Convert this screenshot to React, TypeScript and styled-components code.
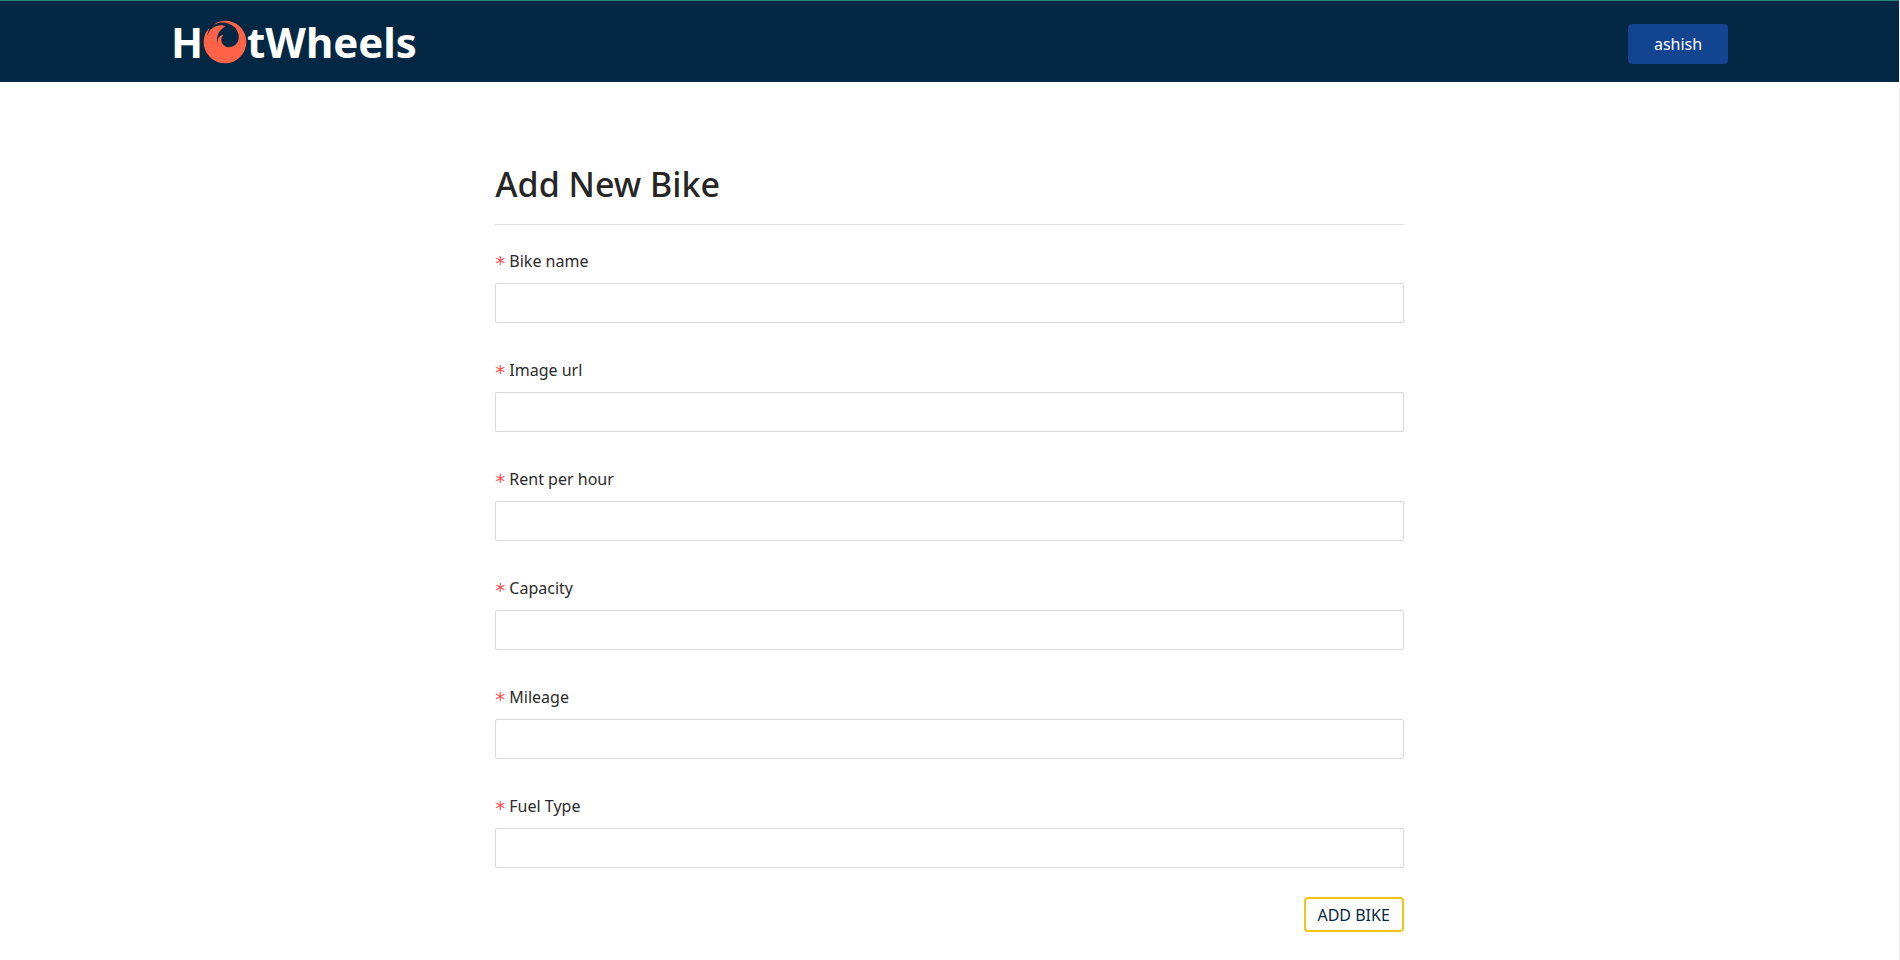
import React from 'react';
import styled, { createGlobalStyle } from 'styled-components';
import { FaFirefox } from 'react-icons/fa';

const GlobalStyle = createGlobalStyle`
  *, *::before, *::after { box-sizing: border-box; }
  html { background: #f0f0f0; }
  body {
    margin: 0 1px 0 0;
    min-height: 100vh;
    background: #fff;
    color: #212529;
    font: 400 16px/28px 'Noto Sans', 'Open Sans', sans-serif;
  }
`;

const Header = styled.header`
  border-top: 1px solid #2f8080;
  background: #042743;
`;

const HeaderInner = styled.div`
  display: flex;
  align-items: center;
  justify-content: space-between;
  width: 82%;
  height: 81px;
  margin: 0 auto;
`;

const Logo = styled.a`
  display: flex;
  align-items: center;
  color: #fff;
  font-size: 42px;
  font-weight: 700;
  line-height: 56px;
  text-decoration: none;
`;

const Flame = styled(FaFirefox)`
  width: 44px;
  height: 44px;
  color: tomato;
`;

const UserButton = styled.button`
  width: 100px;
  height: 40px;
  margin-top: 4px;
  padding: 0;
  border: 0;
  border-radius: 4px;
  background: #13448f;
  color: #fff;
  font: inherit;
`;

const Main = styled.main`
  display: grid;
  grid-template-columns: 5fr 14fr 5fr;
  width: 82%;
  margin: 0 auto;
  padding: 77px 0 28px;
`;

const Form = styled.form`
  grid-column: 2;
  display: flex;
  flex-direction: column;
`;

const Title = styled.h1`
  margin: 0 0 22px;
  padding-bottom: 14px;
  border-bottom: 1px solid #e0e0e0;
  color: #262626;
  font-size: 34px;
  font-weight: 500;
  line-height: 51px;
`;

const Fields = styled.div`
  display: flex;
  flex-direction: column;
  gap: 33px;
  margin-bottom: 29px;
`;

const Field = styled.div`
  display: flex;
  flex-direction: column;
  gap: 8px;
`;

const Label = styled.label`
  display: flex;
  gap: 4px;
  height: 28px;
  color: #2b2b2b;
`;

const Required = styled.span`
  padding-top: 2px;
  color: #ff4d4f;
  font-family: 'DejaVu Sans', sans-serif;
  font-size: 20px;
`;

const Input = styled.input`
  width: 100%;
  height: 40px;
  padding: 4px 12px;
  border: 1px solid #d9d9d9;
  border-radius: 2px;
  background: #fff;
  color: inherit;
  font: inherit;
`;

const SubmitButton = styled.button`
  align-self: flex-end;
  width: 100px;
  height: 35px;
  padding: 0;
  border: 2px solid #f4c414;
  border-radius: 4px;
  background: #fff;
  color: #042743;
  font: inherit;
`;

const fields = [
  { id: 'name', label: 'Bike name' },
  { id: 'image', label: 'Image url' },
  { id: 'rentPerHour', label: 'Rent per hour' },
  { id: 'capacity', label: 'Capacity' },
  { id: 'mileage', label: 'Mileage' },
  { id: 'fuelType', label: 'Fuel Type' },
];

export default function App() {
  return (
    <>
      <GlobalStyle />
      <Header>
        <HeaderInner>
          <Logo href="/">
            H<Flame aria-hidden="true" />tWheels
          </Logo>
          <UserButton type="button">ashish</UserButton>
        </HeaderInner>
      </Header>
      <Main>
        <Form onSubmit={(event) => event.preventDefault()}>
          <Title>Add New Bike</Title>
          <Fields>
            {fields.map(({ id, label }) => (
              <Field key={id}>
                <Label htmlFor={id}>
                  <Required aria-hidden="true">*</Required>
                  {label}
                </Label>
                <Input id={id} name={id} type="text" required />
              </Field>
            ))}
          </Fields>
          <SubmitButton type="submit">ADD BIKE</SubmitButton>
        </Form>
      </Main>
    </>
  );
}
